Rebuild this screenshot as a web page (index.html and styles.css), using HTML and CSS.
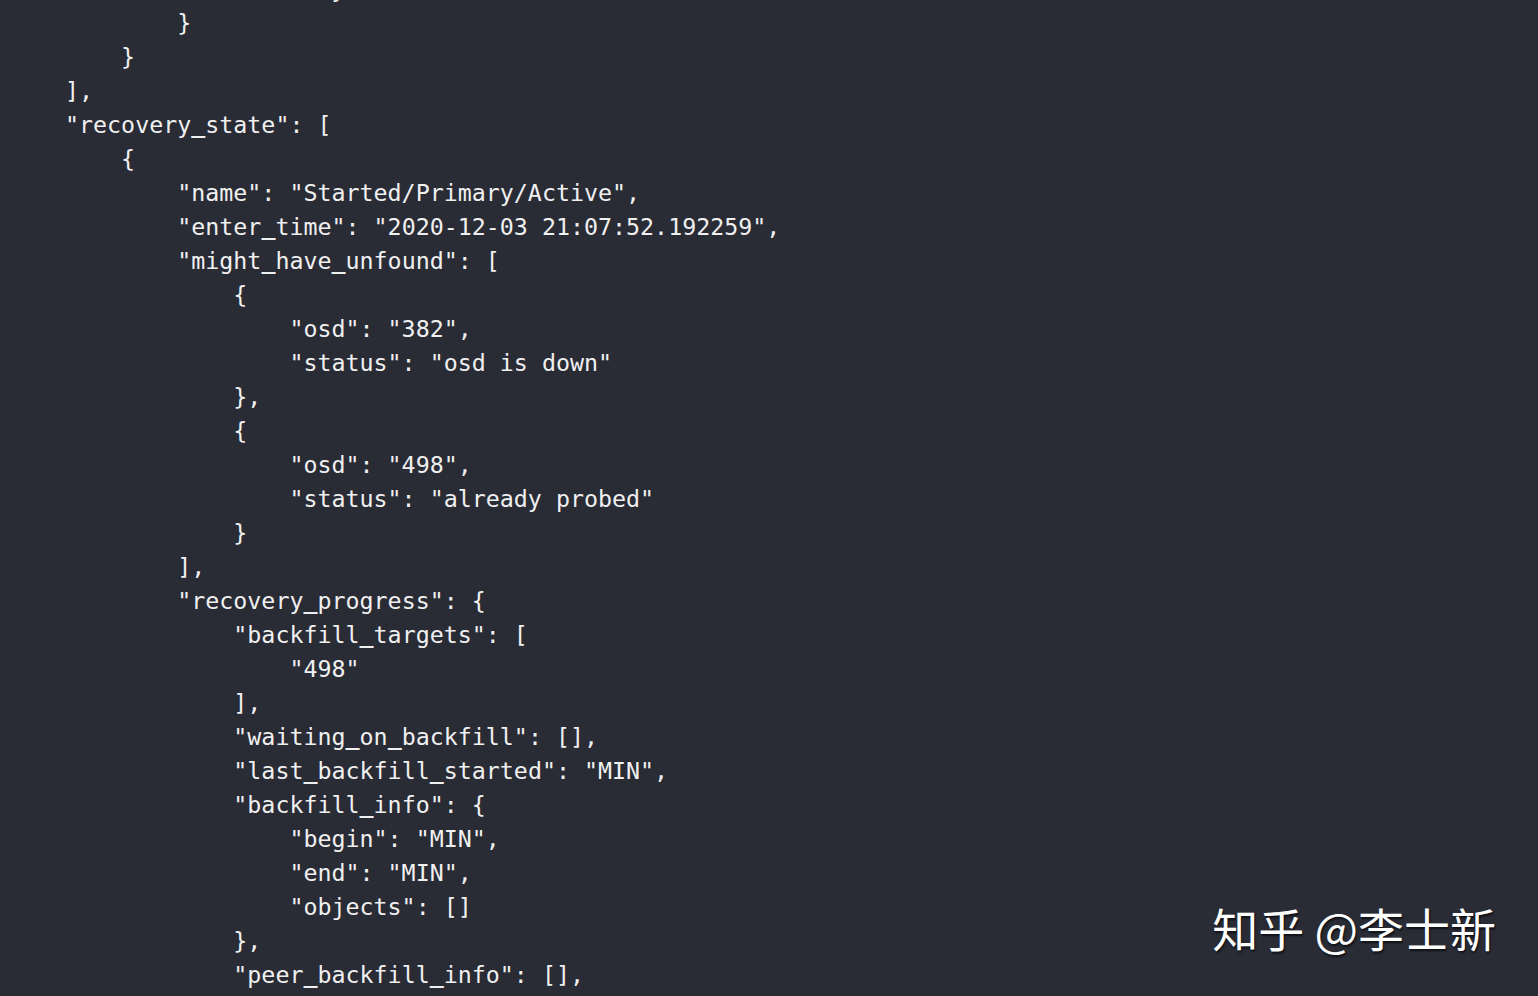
FILE: index.html
```html
<!DOCTYPE html>
<html lang="en">
<head>
<meta charset="utf-8">
<title>recovery_state</title>
<link rel="stylesheet" href="styles.css">
</head>
<body>
<main class="screen">
<div class="code">            "history"
        }
    }
],
"recovery<span class="u">_</span>state": [
    {
        "name": "Started/Primary/Active",
        "enter<span class="u">_</span>time": "2020-12-03 21:07:52.192259",
        "might<span class="u">_</span>have<span class="u">_</span>unfound": [
            {
                "osd": "382",
                "status": "osd is down"
            },
            {
                "osd": "498",
                "status": "already probed"
            }
        ],
        "recovery<span class="u">_</span>progress": {
            "backfill<span class="u">_</span>targets": [
                "498"
            ],
            "waiting<span class="u">_</span>on<span class="u">_</span>backfill": [],
            "last<span class="u">_</span>backfill<span class="u">_</span>started": "MIN",
            "backfill<span class="u">_</span>info": {
                "begin": "MIN",
                "end": "MIN",
                "objects": []
            },
            "peer<span class="u">_</span>backfill<span class="u">_</span>info": [],
            "backfills<span class="u">_</span>in<span class="u">_</span>flight": [],</div>
<div class="watermark" lang="zh-CN">知乎 @李士新</div>
</main>
</body>
</html>
```
FILE: styles.css
```css
html, body {
  margin: 0;
  padding: 0;
  background: #292b35;
  overflow: hidden;
}

.screen {
  position: relative;
  width: 1538px;
  height: 996px;
  overflow: hidden;
  background: #292b35;
}

.code {
  margin-top: -28px;
  padding: 0 0 0 65px;
  font: 23.3px/34px "DejaVu Sans Mono", monospace;
  color: #f0f0f0;
  white-space: pre;
}

.u {
  line-height: 0;
  vertical-align: 2px;
  text-shadow: 0 1px 0 currentColor;
}

.watermark {
  position: absolute;
  right: 42px;
  bottom: 46px;
  font-family: "Noto Sans CJK SC", "Noto Sans", sans-serif;
  font-size: 46px;
  line-height: 1;
  font-weight: 400;
  color: #ffffff;
  text-shadow: 1px 2px 2px rgba(0, 0, 0, 0.6);
  white-space: nowrap;
}
```
